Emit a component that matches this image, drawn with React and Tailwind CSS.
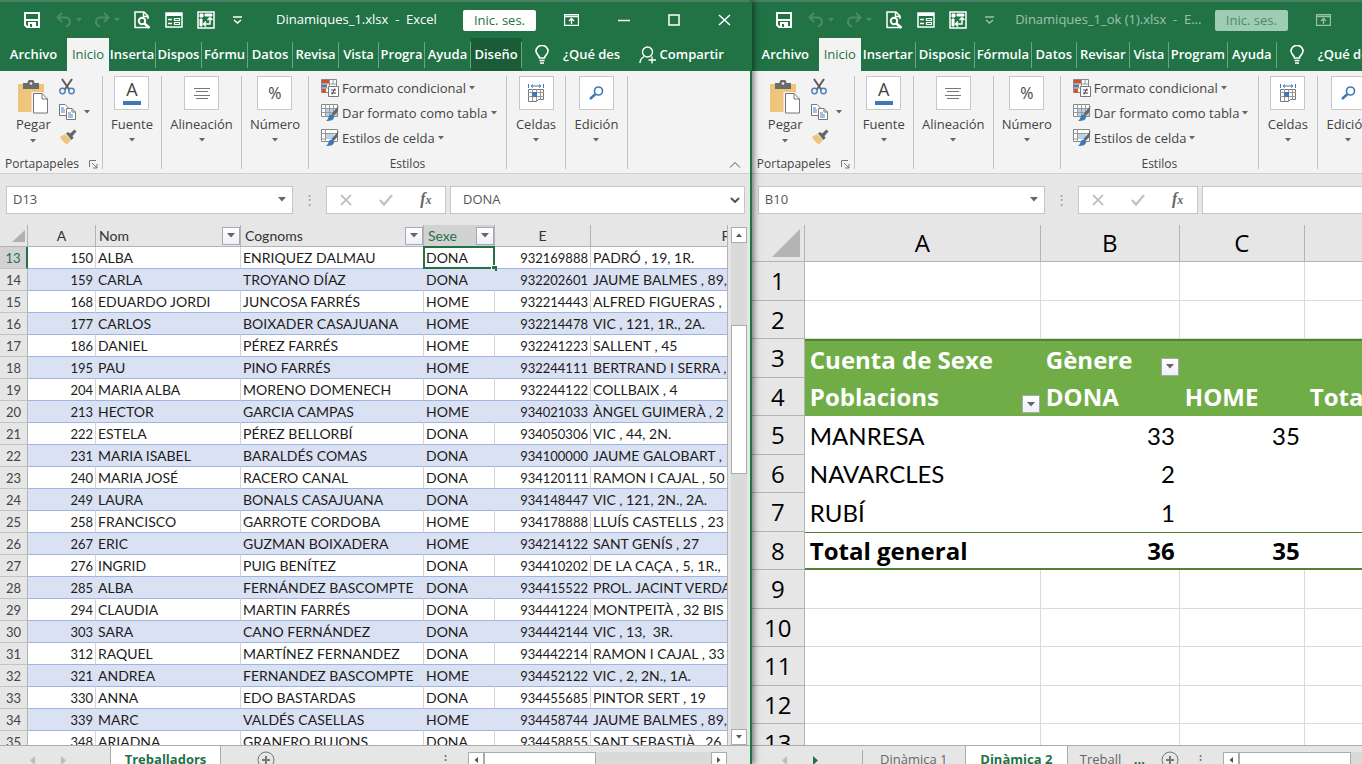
const leftTabs = [
    { label: 'Inserta', width: 'w-[47px]' },
    { label: 'Dispos', width: 'w-[46px]' },
    { label: 'Fórmu', width: 'w-[46px]' },
    { label: 'Datos', width: 'w-[45px]' },
    { label: 'Revisa', width: 'w-[46px]' },
    { label: 'Vista', width: 'w-[40px]' },
    { label: 'Progra', width: 'w-[46px]' },
    { label: 'Ayuda', width: 'w-[46px]' },
    { label: 'Diseño', width: 'w-[51px]', dark: true },
]

const rightTabs = [
    { label: 'Insertar', width: 'w-[55px]' },
    { label: 'Disposic', width: 'w-[59px]' },
    { label: 'Fórmula', width: 'w-[57px]' },
    { label: 'Datos', width: 'w-[45px]' },
    { label: 'Revisar', width: 'w-[53px]' },
    { label: 'Vista', width: 'w-[39px]' },
    { label: 'Program', width: 'w-[59px]' },
    { label: 'Ayuda', width: 'w-[49px]' },
]

const workers = [
    [13, 150, 'ALBA', 'ENRIQUEZ DALMAU', 'DONA', 932169888, 'PADRÓ , 19, 1R.'],
    [14, 159, 'CARLA', 'TROYANO DÍAZ', 'DONA', 932202601, 'JAUME BALMES , 89,'],
    [15, 168, 'EDUARDO JORDI', 'JUNCOSA FARRÉS', 'HOME', 932214443, 'ALFRED FIGUERAS , '],
    [16, 177, 'CARLOS', 'BOIXADER CASAJUANA', 'HOME', 932214478, 'VIC , 121, 1R., 2A.'],
    [17, 186, 'DANIEL', 'PÉREZ FARRÉS', 'HOME', 932241223, 'SALLENT , 45'],
    [18, 195, 'PAU', 'PINO FARRÉS', 'HOME', 932244111, 'BERTRAND I SERRA ,'],
    [19, 204, 'MARIA ALBA', 'MORENO DOMENECH', 'DONA', 932244122, 'COLLBAIX , 4'],
    [20, 213, 'HECTOR', 'GARCIA CAMPAS', 'HOME', 934021033, 'ÀNGEL GUIMERÀ , 2'],
    [21, 222, 'ESTELA', 'PÉREZ BELLORBÍ', 'DONA', 934050306, 'VIC , 44, 2N.'],
    [22, 231, 'MARIA ISABEL', 'BARALDÉS COMAS', 'DONA', 934100000, 'JAUME GALOBART ,'],
    [23, 240, 'MARIA JOSÉ', 'RACERO CANAL', 'DONA', 934120111, 'RAMON I CAJAL , 50'],
    [24, 249, 'LAURA', 'BONALS CASAJUANA', 'DONA', 934148447, 'VIC , 121, 2N., 2A.'],
    [25, 258, 'FRANCISCO', 'GARROTE CORDOBA', 'HOME', 934178888, 'LLUÍS CASTELLS , 23'],
    [26, 267, 'ERIC', 'GUZMAN BOIXADERA', 'HOME', 934214122, 'SANT GENÍS , 27'],
    [27, 276, 'INGRID', 'PUIG BENÍTEZ', 'DONA', 934410202, 'DE LA CAÇA , 5, 1R.,'],
    [28, 285, 'ALBA', 'FERNÁNDEZ BASCOMPTE', 'DONA', 934415522, 'PROL. JACINT VERDA'],
    [29, 294, 'CLAUDIA', 'MARTIN FARRÉS', 'DONA', 934441224, 'MONTPEITÀ , 32 BIS'],
    [30, 303, 'SARA', 'CANO FERNÁNDEZ', 'DONA', 934442144, 'VIC , 13,  3R.'],
    [31, 312, 'RAQUEL', 'MARTÍNEZ FERNANDEZ', 'DONA', 934442214, 'RAMON I CAJAL , 33'],
    [32, 321, 'ANDREA', 'FERNANDEZ BASCOMPTE', 'HOME', 934452122, 'VIC , 2, 2N., 1A.'],
    [33, 330, 'ANNA', 'EDO BASTARDAS', 'DONA', 934455685, 'PINTOR SERT , 19'],
    [34, 339, 'MARC', 'VALDÉS CASELLAS', 'HOME', 934458744, 'JAUME BALMES , 89,'],
    [35, 348, 'ARIADNA', 'GRANERO BUJONS', 'DONA', 934458855, 'SANT SEBASTIÀ , 26'],
]

const pivotRows = [
    { n: 1, cells: ['', '', '', ''] },
    { n: 2, cells: ['', '', '', ''] },
    { n: 3, kind: 'head', cells: ['Cuenta de Sexe', 'Gènere', '', ''], filter: 1 },
    { n: 4, kind: 'head', cells: ['Poblacions', 'DONA', 'HOME', 'Total'], filter: 0 },
    { n: 5, kind: 'body', cells: ['MANRESA', 33, 35, 68] },
    { n: 6, kind: 'body', cells: ['NAVARCLES', 2, '', 2] },
    { n: 7, kind: 'body', cells: ['RUBÍ', 1, '', 1] },
    { n: 8, kind: 'total', cells: ['Total general', 36, 35, 71] },
    { n: 9, cells: ['', '', '', ''] },
    { n: 10, cells: ['', '', '', ''] },
    { n: 11, cells: ['', '', '', ''] },
    { n: 12, cells: ['', '', '', ''] },
    { n: 13, cells: ['', '', '', ''] },
]

function Caret({ className = 'text-[#666]' }) {
    return (
        <svg width="6" height="4" viewBox="0 0 6 4" className={`shrink-0 ${className}`}>
            <path d="M0 0h6L3 3.5z" fill="currentColor" />
        </svg>
    )
}

/* ---------- icons ---------- */

function SaveIcon() {
    return (
        <svg width="16" height="16" viewBox="0 0 16 16" fill="none">
            <path d="M1 1h14v14H3l-2-2z" stroke="white" strokeWidth="2" />
            <path d="M2 8h12" stroke="white" strokeWidth="2" />
            <path d="M4 10h8v5H4z" fill="white" />
            <path d="M6 12h2v3H6z" fill="#217346" />
        </svg>
    )
}

function UndoIcon({ flip }) {
    return (
        <svg width="16" height="16" viewBox="0 0 16 16" fill="none" className={flip ? '-scale-x-100' : ''}>
            <path d="M6 1 1.500 5.500 6 10M2 5.500h7c6 0 7 7 1 9" stroke="#4d8b68" strokeWidth="2" />
        </svg>
    )
}

function PreviewIcon() {
    return (
        <svg width="17" height="18" viewBox="0 0 17 18" fill="none" stroke="white">
            <path d="M1 17V1h9l4 4v3M9.500 1v4.500H14M1 16.500h13" strokeWidth="1.500" />
            <circle cx="8" cy="10" r="3.200" strokeWidth="2" />
            <path d="m10.500 12.500 5 4.500" strokeWidth="2.500" />
        </svg>
    )
}

function FormIcon() {
    return (
        <svg width="18" height="16" viewBox="0 0 18 16" fill="none" stroke="white">
            <path d="M1 1h16v14H1z" strokeWidth="1.500" />
            <path d="M1 2.500h16" strokeWidth="3" />
            <path d="M3 7.500h4M3 11.500h4" strokeWidth="1.500" />
            <path d="M9.500 6.500h5v2h-5zM9.500 10.500h5v2h-5z" strokeWidth="1.200" />
        </svg>
    )
}

function PivotIcon() {
    return (
        <svg width="18" height="18" viewBox="0 0 18 18" fill="none" stroke="white">
            <path d="M1 1h16v16H1z" strokeWidth="1.500" />
            <path d="M3 3h3v3H3zM8 3h7v2H8zM3 8h2v7H3z" fill="white" strokeWidth="1" />
            <path d="M7 13h6V7M9 10.500 6.500 13 9 15.500M10.500 9 13 6.500 15.500 9" strokeWidth="1.500" />
        </svg>
    )
}

function PasteIcon() {
    return (
        <svg width="32" height="34" viewBox="0 0 32 34">
            <path d="M1 4h26v28H1z" fill="#edc57c" />
            <path d="M6 3h4.500a3.500 3.500 0 0 1 7 0H22v6H6z" fill="#6b6b6b" />
            <circle cx="14" cy="3.500" r="1.300" fill="#f3f3f3" />
            <path d="M15.500 12h-1v22h17V19l-6-7z" fill="#f3f3f3" />
            <path d="M16.500 13.500H25l5.500 5.500v14h-14z" fill="white" stroke="#777" />
            <path d="M25 13.500V19h5.500" fill="none" stroke="#777" />
        </svg>
    )
}

function CutIcon() {
    return (
        <svg width="16" height="17" viewBox="0 0 16 17" fill="none">
            <path d="m3 1 7.500 11M13 1 5.500 12" stroke="#5d5d5d" strokeWidth="2" />
            <circle cx="3.500" cy="13" r="2.700" stroke="#4a7ebb" strokeWidth="1.400" />
            <circle cx="12.500" cy="13" r="2.700" stroke="#4a7ebb" strokeWidth="1.400" />
        </svg>
    )
}

function CopyIcon() {
    return (
        <svg width="17" height="16" viewBox="0 0 17 16" fill="white" stroke="#777">
            <path d="M.5.500H6L9 3.500v8H.5z" />
            <path d="M2 4h3M2 6h4M2 8h4" stroke="#4a7ebb" />
            <path d="M7.500 4.500H13l3.500 3.500v7.500h-9z" />
            <path d="M13 4.500V8h3.500" fill="none" />
            <path d="M9 9h3M9 11h5M9 13h5" stroke="#4a7ebb" />
        </svg>
    )
}

function BrushIcon() {
    return (
        <svg width="18" height="16" viewBox="0 0 18 16">
            <path d="M1 8 6 5l6 6-4 4.500C6 14 3 12 1 8z" fill="#edc57c" />
            <path d="m7 4.500 2-1.500 2 1.500L15.500.500l2 2L13.500 7l1 2-2 2z" fill="#666" />
        </svg>
    )
}

function ConditionalIcon() {
    return (
        <svg width="18" height="18" viewBox="0 0 18 18" fill="none">
            <path d="M.5.500h15v13H.5z" fill="white" stroke="#888" />
            <path d="M1 1h7v3.500H1zM1 9.500h4v4H1z" fill="#d2512d" />
            <path d="M1 5.500h5v3H1z" fill="#4a7ebb" />
            <path d="M8.500 1v12M1 5h14M1 9h14M12 1v4" stroke="#999" />
            <path d="M7.500 7.500h10v10h-10z" fill="white" stroke="#777" />
            <path d="M10 11h5M10 14h5M14 9.500l-3 6" stroke="#444" />
        </svg>
    )
}

function TableStyleIcon({ cell }) {
    return (
        <svg width="18" height="18" viewBox="0 0 18 18" fill="none">
            <path d="M.5.500h16v12H.5z" fill="white" stroke="#888" />
            <path d={cell ? 'M4 4h9v6H4z' : 'M5 4h11v8H5z'} fill="#b9d0ea" />
            <path d={cell ? 'M4.500 0v13M0 4.500h17M0 10h5' : 'M4.500 0v13M8.500 0v13M12.500 0v13M0 4.500h17M0 8.500h17'} stroke="#999" />
            <path d="m17.500 2-1 6-4 4-2-2z" fill="#666" />
            <path d="M9 11c2-1 4 0 4 2 0 3-3 4-8 4 3-2 2-5 4-6z" fill="#3f78b9" />
        </svg>
    )
}

function CellsIcon() {
    return (
        <svg width="18" height="19" viewBox="0 0 18 19" fill="none">
            <path d="M1.500 0v4M16.500 0v4M4 2h10M6 .5 4 2l2 1.500M12 .5 14 2l-2 1.500" stroke="#3f78b9" />
            <path d="M1.500 5.500h15v10h-5l-2 2h-8z" stroke="#777" />
            <path d="M1 8.500h16M1 12.500h16M5.500 5v12M9.500 5v12M13.500 5v11" stroke="#999" />
            <path d="M5 8h5v5H5z" fill="#3f78b9" />
        </svg>
    )
}

function FindIcon() {
    return (
        <svg width="15" height="14" viewBox="0 0 15 14" fill="none" stroke="#3f78b9">
            <circle cx="9.500" cy="5" r="4" strokeWidth="1.600" />
            <path d="M6.500 8 1 13" strokeWidth="2.500" />
        </svg>
    )
}

function ShareIcon() {
    return (
        <svg width="17" height="18" viewBox="0 0 17 18" fill="none" stroke="white" strokeWidth="1.400">
            <circle cx="8.500" cy="6" r="5" />
            <path d="M1 17c0-3 1.500-5 4-6.500M13 10.500v7M9.500 14H17" />
        </svg>
    )
}

function BulbIcon() {
    return (
        <svg width="14" height="19" viewBox="0 0 14 19" fill="none" stroke="white" strokeWidth="1.600">
            <path d="M4.500 13C4.500 10.500 1 9.500 1 6a6 5.500 0 0 1 12 0c0 3.500-3.500 4.500-3.500 7z" />
            <path d="M4.500 15.500h5M5 18h4" />
        </svg>
    )
}

/* ---------- window chrome ---------- */

function TitleBar({ title, inactive }) {
    const dim = inactive ? 'opacity-55' : ''
    return (
        <header className="flex items-center h-[38px] overflow-hidden border-t-2 border-[#4b7f63] text-white">
            <div className="flex shrink-0 items-center w-[250px] pl-6">
                <button aria-label="Guardar"><SaveIcon /></button>
                <button aria-label="Deshacer" className="ml-4 flex items-center gap-1"><UndoIcon /><Caret className="text-[#4d8b68]" /></button>
                <button aria-label="Rehacer" className="ml-3 flex items-center gap-1"><UndoIcon flip /><Caret className="text-[#4d8b68]" /></button>
                <button aria-label="Vista previa" className="ml-[14px]"><PreviewIcon /></button>
                <button aria-label="Formulario" className="ml-[14px]"><FormIcon /></button>
                <button aria-label="Tabla dinámica" className="ml-[14px]"><PivotIcon /></button>
                <button aria-label="Personalizar" className={`ml-[18px] ${dim}`}>
                    <svg width="9" height="8" viewBox="0 0 9 8" fill="none" stroke="white" strokeWidth="1.500">
                        <path d="M0 1h9M1 4l3.500 3L8 4" />
                    </svg>
                </button>
            </div>
            <h1 className={`w-[213px] shrink-0 text-center text-[13px] whitespace-pre ${inactive ? 'opacity-55' : 'font-medium'}`}>{title}</h1>
            <button className={`w-[73px] h-[21px] shrink-0 rounded-xs text-[13px] leading-5 ${inactive ? 'bg-[#9fcdb3] text-[#4a8c68]' : 'bg-white text-[#217346]'}`}>
                Inic. ses.
            </button>
            <button aria-label="Opciones de cinta" className={`ml-7 shrink-0 ${dim}`}>
                <svg width="15" height="12" viewBox="0 0 15 12" fill="none" stroke="white">
                    <path d="M.5.500h14v11H.5zM.5 2.500h14M7.500 10V5M5 7l2.500-2.500L10 7" strokeWidth="1.300" />
                </svg>
            </button>
            <button aria-label="Minimizar" className="ml-[38px] shrink-0">
                <svg width="13" height="12" viewBox="0 0 13 12"><path d="M1 6.500h12" stroke="white" strokeWidth="1.500" /></svg>
            </button>
            <button aria-label="Maximizar" className="ml-[38px] shrink-0">
                <svg width="12" height="12" viewBox="0 0 12 12" fill="none"><path d="M1 1h10v10H1z" stroke="white" strokeWidth="1.500" /></svg>
            </button>
            <button aria-label="Cerrar" className="ml-[38px] shrink-0">
                <svg width="13" height="12" viewBox="0 0 13 12"><path d="m1 1 11 10M12 1 1 11" stroke="white" strokeWidth="1.500" /></svg>
            </button>
        </header>
    )
}

function TabStrip({ tabs, share }) {
    return (
        <nav className="flex items-stretch h-[33px] overflow-hidden text-[13px] font-semibold text-white">
            <button className="w-[67px] shrink-0">Archivo</button>
            <button className="w-[42px] shrink-0 bg-[#f3f3f3] font-normal text-[#217346]">Inicio</button>
            {tabs.map((tab) => (
                <div key={tab.label} className={`flex shrink-0 items-center ${tab.width} ${tab.dark ? 'bg-[#1a5c38]' : ''}`}>
                    <button className="flex-1 min-w-0 flex justify-center whitespace-nowrap">{tab.label}</button>
                    <span className="w-px h-[26px] bg-[#6fa587]" />
                </div>
            ))}
            <button className="ml-[13px] flex shrink-0 items-center gap-[14px]">
                <BulbIcon />
                <span className="whitespace-nowrap text-left">¿Qué des</span>
            </button>
            {share && (
                <button className="ml-auto mr-[26px] flex shrink-0 items-center gap-1">
                    <ShareIcon />
                    Compartir
                </button>
            )}
        </nav>
    )
}

function BigButton({ label, width, children }) {
    return (
        <div className={`flex shrink-0 justify-center border-r border-[#c3c3c3] ${width}`}>
            <button className="flex flex-col items-center">
                <span className="flex h-[34px] w-[35px] items-center justify-center border border-[#c8c8c8] bg-white">{children}</span>
                <span className="mt-1 text-[13px] leading-5">{label}</span>
                <Caret className="mt-1 text-[#666]" />
            </button>
        </div>
    )
}

function Ribbon({ collapse }) {
    return (
        <section className="flex h-[103px] overflow-hidden border-b border-[#cfcfcf] bg-[#f3f3f3] pt-[5px] pb-1 text-[#444]">
            <div className="flex w-[103px] shrink-0 flex-col justify-between border-r border-[#c3c3c3]">
                <div className="flex pl-4">
                    <button className="mt-1 flex flex-col items-center">
                        <PasteIcon />
                        <span className="text-[13px] leading-5">Pegar</span>
                        <Caret className="mt-[5px] text-[#666]" />
                    </button>
                    <div className="ml-2 mt-[2px] flex flex-col gap-[9px]">
                        <button aria-label="Cortar"><CutIcon /></button>
                        <button aria-label="Copiar" className="flex items-center gap-2"><CopyIcon /><Caret /></button>
                        <button aria-label="Copiar formato"><BrushIcon /></button>
                    </div>
                </div>
                <div className="flex items-center justify-between pl-[5px] pr-1 text-xs leading-[10px]">
                    Portapapeles
                    <svg width="9" height="9" viewBox="0 0 9 9" fill="none" stroke="#777">
                        <path d="M.5 7V.5H7M3 3l5 5M8 4v4H4" />
                    </svg>
                </div>
            </div>
            <BigButton label="Fuente" width="w-[59px]">
                <span className="flex flex-col items-center text-lg font-medium leading-4">
                    A
                    <span className="mt-1 h-1 w-[18px] bg-[#3f78b9]" />
                </span>
            </BigButton>
            <BigButton label="Alineación" width="w-[80px]">
                <svg width="16" height="13" viewBox="0 0 16 13" stroke="#777">
                    <path d="M0 1.500h16M2 4.500h12M0 8.500h16M2 11.500h12" />
                </svg>
            </BigButton>
            <BigButton label="Número" width="w-[67px]">
                <span className="text-base">%</span>
            </BigButton>
            <div className="flex w-[198px] shrink-0 flex-col justify-between border-r border-[#c3c3c3]">
                <div className="flex flex-col items-start gap-[5px] pl-3 pt-[2px] text-[13px] leading-5">
                    <button className="flex items-center gap-[3px] whitespace-nowrap"><ConditionalIcon />Formato condicional<Caret /></button>
                    <button className="flex items-center gap-[3px] whitespace-nowrap"><TableStyleIcon />Dar formato como tabla<Caret /></button>
                    <button className="flex items-center gap-[3px] whitespace-nowrap"><TableStyleIcon cell />Estilos de celda<Caret /></button>
                </div>
                <div className="text-center text-xs leading-[10px]">Estilos</div>
            </div>
            <BigButton label="Celdas" width="w-[59px]"><CellsIcon /></BigButton>
            <BigButton label="Edición" width="w-[62px]"><FindIcon /></BigButton>
            {collapse && (
                <button aria-label="Contraer la cinta" className="ml-auto mr-[9px] self-end">
                    <svg width="12" height="8" viewBox="0 0 12 8" fill="none"><path d="m1 6.500 5-5 5 5" stroke="#555" /></svg>
                </button>
            )}
        </section>
    )
}

function FormulaBar({ cell, value }) {
    return (
        <div className="flex h-[51px] items-center overflow-hidden pl-[6px] pr-[5px] text-[13px] text-[#555]">
            <div className="flex h-7 w-[287px] shrink-0 items-center border border-[#c6c6c6] bg-white pr-[6px]">
                <input aria-label="Cuadro de nombres" defaultValue={cell} className="min-w-0 flex-1 pl-[6px] outline-none" />
                <button aria-label="Lista de nombres">
                    <svg width="8" height="5" viewBox="0 0 8 5"><path d="M0 0h8L4 4.500z" fill="#666" /></svg>
                </button>
            </div>
            <span className="w-[33px] shrink-0 text-center text-[#999]">⋮</span>
            <div className="mr-1 flex h-7 w-[120px] shrink-0 items-center justify-around border border-[#c6c6c6] bg-white">
                <button aria-label="Cancelar">
                    <svg width="12" height="12" viewBox="0 0 12 12"><path d="m1 1 10 10M11 1 1 11" stroke="#c4c4c4" strokeWidth="2" /></svg>
                </button>
                <button aria-label="Introducir">
                    <svg width="14" height="12" viewBox="0 0 14 12" fill="none"><path d="m1 6 4 4.500L13 1" stroke="#c4c4c4" strokeWidth="2.500" /></svg>
                </button>
                <button aria-label="Insertar función" className="font-['Liberation_Serif',serif] text-base leading-4 font-bold italic text-[#666]">
                    f<span className="text-xs">x</span>
                </button>
            </div>
            <div className="flex h-7 min-w-[293px] flex-1 items-center border border-[#c6c6c6] bg-white pr-1">
                <input aria-label="Barra de fórmulas" defaultValue={value} className="min-w-0 flex-1 pl-3 outline-none" />
                <button aria-label="Expandir">
                    <svg width="10" height="6" viewBox="0 0 10 6" fill="none"><path d="m1 1 4 4 4-4" stroke="#555" strokeWidth="2" /></svg>
                </button>
            </div>
        </div>
    )
}

function FilterButton({ label }) {
    return (
        <button aria-label={`Filtrar ${label}`} className="flex h-[18px] w-[18px] shrink-0 items-center justify-center border border-[#a3a9b5] bg-linear-to-b from-white to-[#eef0f6]">
            <svg width="8" height="5" viewBox="0 0 8 5"><path d="M0 0h8L4 4.500z" fill="#666" /></svg>
        </button>
    )
}

/* ---------- sheets ---------- */

function WorkersSheet() {
    const head = 'h-[22px] border-r border-b border-[#b3b3b3] p-0 font-normal'
    return (
        <div className="min-w-0 flex-1 overflow-hidden border-r border-[#b3b3b3] bg-white">
            <table className="w-[861px] table-fixed border-separate border-spacing-0 font-['Lato',sans-serif] text-[14px] leading-5 text-[#1c1c1c]">
                <colgroup>
                    <col className="w-7" />
                    <col className="w-[68px]" />
                    <col className="w-[145px]" />
                    <col className="w-[183px]" />
                    <col className="w-[71px]" />
                    <col className="w-[96px]" />
                    <col className="w-[270px]" />
                </colgroup>
                <thead className="bg-[#e6e6e6] text-[#333]">
                    <tr>
                        <th className={head}>
                            <svg width="14" height="14" viewBox="0 0 14 14" className="ml-[11px]"><path d="M14 1v12H1z" fill="#b1b1b1" /></svg>
                        </th>
                        <th className={head}>A</th>
                        <th className={head}><div className="flex items-center justify-between pl-[3px]">Nom<FilterButton label="Nom" /></div></th>
                        <th className={head}><div className="flex items-center justify-between pl-1">Cognoms<FilterButton label="Cognoms" /></div></th>
                        <th className={`${head} bg-[#d2d2d2] text-[#217346]`}><div className="flex items-center justify-between pl-1">Sexe<FilterButton label="Sexe" /></div></th>
                        <th className={head}>E</th>
                        <th className={head}>F</th>
                    </tr>
                </thead>
                <tbody>
                    {workers.map(([n, id, name, surname, sex, phone, street]) => {
                        const td = n % 2
                            ? 'h-[22px] border-r border-b border-r-[#d4d4d4] border-b-[#9db5e0] bg-white pt-px pb-0 whitespace-pre'
                            : 'h-[22px] border-r border-b border-r-[#d9e1f2] border-b-[#9db5e0] bg-[#d9e1f2] pt-px pb-0 whitespace-pre'
                        return (
                            <tr key={n}>
                                <th className={`border-r border-b px-0 pt-px pb-0 text-[13px] font-normal ${n === 13 ? 'border-r-2 border-r-[#217346] border-b-[#c3c3c3] bg-[#d2d2d2] text-[#217346]' : 'border-r-[#b3b3b3] border-b-[#c3c3c3] bg-[#e6e6e6] text-[#444]'}`}>{n}</th>
                                <td className={`${td} pr-[2px] text-right text-[13px]`}>{id}</td>
                                <td className={`${td} pl-[2px]`}>{name}</td>
                                <td className={`${td} pl-[2px]`}>{surname}</td>
                                <td className={`${td} relative pl-[2px]`}>
                                    {sex}
                                    {n === 13 && (
                                        <span className="absolute -inset-x-px -top-px -bottom-px border-2 border-[#217346]">
                                            <span className="absolute -right-1 -bottom-1 h-[6px] w-[6px] border-t border-l border-white bg-[#217346]" />
                                        </span>
                                    )}
                                </td>
                                <td className={`${td} pr-[2px] text-right text-[13px]`}>{phone}</td>
                                <td className={`${td} pl-[2px]`}>{street}</td>
                            </tr>
                        )
                    })}
                </tbody>
            </table>
        </div>
    )
}

function VerticalScroll() {
    return (
        <div className="mx-[3px] mt-[2px] flex w-4 shrink-0 flex-col bg-[#dadada]">
            <button aria-label="Subir" className="flex h-4 items-center justify-center border border-[#ababab] bg-white">
                <Caret className="rotate-180 text-[#555]" />
            </button>
            <div className="flex flex-1 flex-col">
                <div className="flex-[82]" />
                <div className="flex-[148] border border-[#ababab] bg-white" />
                <div className="flex-[257]" />
            </div>
            <button aria-label="Bajar" className="flex h-4 items-center justify-center border border-[#ababab] bg-white">
                <Caret className="text-[#555]" />
            </button>
        </div>
    )
}

function PivotSheet() {
    const head = "h-[37px] border-r border-b border-[#b3b3b3] p-0 font-['Open_Sans',sans-serif] font-normal"
    const style = {
        head: "bg-[#70ad47] text-white font-['Open_Sans',sans-serif] font-bold",
        body: 'bg-white',
        total: "bg-white font-['Open_Sans',sans-serif] font-bold border-t border-b-2 border-[#548235]",
        empty: 'bg-white border-r border-b border-[#dadada]',
    }
    return (
        <div className="min-w-0 flex-1 overflow-hidden bg-white">
            <table className="w-[753px] table-fixed border-separate border-spacing-0 font-['Lato',sans-serif] text-2xl text-black">
                <colgroup>
                    <col className="w-[53px]" />
                    <col className="w-[236px]" />
                    <col className="w-[139px]" />
                    <col className="w-[125px]" />
                    <col className="w-[200px]" />
                </colgroup>
                <thead className="bg-[#e6e6e6]">
                    <tr>
                        <th className={head}>
                            <svg width="28" height="28" viewBox="0 0 28 28" className="ml-5"><path d="M28 0v28H0z" fill="#b4b4b4" /></svg>
                        </th>
                        {['A', 'B', 'C', 'D'].map((c) => (
                            <th key={c} className={head}>{c}</th>
                        ))}
                    </tr>
                </thead>
                <tbody>
                    {pivotRows.map((row) => (
                        <tr key={row.n} className="h-[38px] odd:h-[39px]">
                            <th className="border-r border-b border-[#b3b3b3] bg-[#e6e6e6] p-0 font-['Open_Sans',sans-serif] font-normal leading-8">{row.n}</th>
                            {row.cells.map((cell, i) => (
                                <td
                                    key={i}
                                    className={`px-[5px] py-0 leading-8 whitespace-nowrap ${style[row.kind || 'empty']} ${typeof cell === 'number' ? 'text-right' : ''} ${row.n === 3 ? 'border-t-2 border-[#548235]' : ''}`}
                                >
                                    {row.filter === i ? (
                                        <div className="-mr-1 flex items-end justify-between">{cell}<FilterButton label={cell} /></div>
                                    ) : cell}
                                </td>
                            ))}
                        </tr>
                    ))}
                </tbody>
            </table>
        </div>
    )
}

/* ---------- footer ---------- */

function Arrow({ left, active }) {
    return (
        <button aria-label={left ? 'Anterior' : 'Siguiente'} className="w-[6px]">
            <svg width="6" height="9" viewBox="0 0 6 9" className={left ? '-scale-x-100' : ''}>
                <path d="M0 0v9l5-4.500z" fill={active ? '#217346' : '#bcbcbc'} />
            </svg>
        </button>
    )
}

function AddSheet() {
    return (
        <button aria-label="Hoja nueva" className="shrink-0">
            <svg width="18" height="18" viewBox="0 0 18 18" fill="none" stroke="#777">
                <circle cx="9" cy="9" r="8" />
                <path d="M9 5v8M5 9h8" strokeWidth="2" />
            </svg>
        </button>
    )
}

function HorizontalScroll() {
    return (
        <div className="flex h-[17px] w-[259px] shrink-0 bg-[#dadada]">
            <button aria-label="Izquierda" className="flex w-4 items-center justify-center border border-[#ababab] bg-white">
                <Caret className="rotate-90 text-[#555]" />
            </button>
            <div className="w-28 border border-[#ababab] bg-white" />
            <button aria-label="Derecha" className="ml-auto flex w-4 items-center justify-center border border-[#ababab] bg-white">
                <Caret className="-rotate-90 text-[#555]" />
            </button>
        </div>
    )
}

function Footer({ children }) {
    return (
        <footer className="h-[19px] shrink-0 overflow-hidden border-t border-[#ababab] bg-[#e6e6e6]">
            <div className="flex h-7 items-center text-[13px] text-[#666]">{children}</div>
        </footer>
    )
}

export default function App() {
    return (
        <div className="flex h-screen overflow-hidden bg-[#217346] font-['Open_Sans',sans-serif]">
            <main className="relative z-10 flex w-[55.2%] shrink-0 flex-col border-r-2 border-[#217346] bg-[#e6e6e6] shadow-[2px_0_6px_rgba(0,0,0,0.5)]">
                <div className="shrink-0 bg-[#217346]">
                    <TitleBar title="Dinamiques_1.xlsx  -  Excel" />
                    <TabStrip tabs={leftTabs} share />
                </div>
                <Ribbon collapse />
                <FormulaBar cell="D13" value="DONA" />
                <div className="flex min-h-0 flex-1">
                    <WorkersSheet />
                    <VerticalScroll />
                </div>
                <Footer>
                    <div className="flex w-[110px] shrink-0 gap-[26px] pl-[29px]"><Arrow left /><Arrow /></div>
                    <button className="h-full w-[111px] shrink-0 border-x border-[#ababab] bg-white font-bold text-[#217346]">Treballadors</button>
                    <div className="ml-9 flex flex-1 items-center"><AddSheet /></div>
                    <span className="mr-4">⋮</span>
                    <div className="mr-[23px]"><HorizontalScroll /></div>
                </Footer>
            </main>
            <section className="flex min-w-0 flex-1 flex-col bg-[#e6e6e6]">
                <div className="shrink-0 bg-[#217346]">
                    <TitleBar title="Dinamiques_1_ok (1).xlsx  -  E..." inactive />
                    <TabStrip tabs={rightTabs} />
                </div>
                <Ribbon />
                <FormulaBar cell="B10" value="" />
                <div className="flex min-h-0 flex-1">
                    <PivotSheet />
                </div>
                <Footer>
                    <div className="flex h-5 w-[111px] shrink-0 items-center gap-[26px] border-r border-[#ababab] pl-[29px]"><Arrow left /><Arrow active /></div>
                    <button className="w-[102px] shrink-0">Dinàmica 1</button>
                    <button className="h-full w-[103px] shrink-0 border-x border-[#ababab] bg-white font-bold text-[#217346]">Dinàmica 2</button>
                    <button className="ml-3 w-[54px] shrink-0 text-left">Treball</button>
                    <button className="mr-4 shrink-0 font-bold text-[#217346]">...</button>
                    <AddSheet />
                    <span className="w-11 shrink-0 text-center">⋮</span>
                    <HorizontalScroll />
                </Footer>
            </section>
        </div>
    )
}
